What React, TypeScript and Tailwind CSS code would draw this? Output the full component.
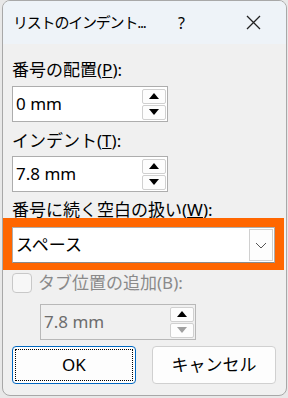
import React from "react";

function SpinButtons({ disabled }: { disabled?: boolean }) {
    return (
        <div className="flex flex-col gap-[1px] pr-[1px]">
            <div className="w-[24px] h-[15px] flex items-center justify-center bg-[#fdfdfd] border border-[#d0d0d0] rounded-[2px]">
                <svg width="10" height="6" viewBox="0 0 10 6">
                    <path d="M5 0 L10 6 L0 6 Z" fill="#000" />
                </svg>
            </div>
            <div className="w-[24px] h-[15px] flex items-center justify-center bg-[#fdfdfd] border border-[#d0d0d0] rounded-[2px]">
                <svg width="10" height="6" viewBox="0 0 10 6">
                    <path d="M0 0 L10 0 L5 6 Z" fill={disabled ? "#a0a0a0" : "#000"} />
                </svg>
            </div>
        </div>
    );
}

function SpinInput({ value, disabled }: { value: string; disabled?: boolean }) {
    return (
        <div
            className={`flex items-center justify-between w-[156px] h-[36px] border ${
                disabled ? "bg-[#f0f0f0] border-[#b8b8b8]" : "bg-white border-[#adadad]"
            }`}
        >
            <span className={`pl-[3px] text-[17px] ${disabled ? "text-[#6d6d6d]" : "text-black"}`}>{value}</span>
            <SpinButtons disabled={disabled} />
        </div>
    );
}

export default function App() {
    return (
        <div
            className="w-[288px] h-[398px] bg-[#e8e8e8] pl-[2px] pr-[1px] pb-[2px] text-black"
            style={{ fontFamily: '"Noto Sans", "Noto Sans CJK JP", sans-serif' }}
        >
            <div className="h-full flex flex-col border border-[#a8a8a8] rounded-[8px] overflow-hidden bg-[#f0f0f0]">
                <div className="h-[43px] shrink-0 flex items-center bg-[#eef3f8] pl-[10px] text-[15px] tracking-[-1.2px]">
                    <span className="w-[165px]">リストのインデント...</span>
                    <span className="w-[68px] text-[16px]">?</span>
                    <svg width="15" height="15" viewBox="0 0 15 15">
                        <path d="M1 1 L14 14 M14 1 L1 14" stroke="#222" strokeWidth="1.3" />
                    </svg>
                </div>
                <div className="flex flex-col pl-[9px] pt-[15px] text-[17px]">
                    <div className="leading-[22px]">
                        番号の配置(<span className="underline">P</span>):
                    </div>
                    <div className="mt-[5px]">
                        <SpinInput value="0 mm" />
                    </div>
                    <div className="leading-[22px] mt-[8px]">
                        インデント(<span className="underline">T</span>):
                    </div>
                    <div className="mt-[4px]">
                        <SpinInput value="7.8 mm" />
                    </div>
                    <div className="leading-[22px] mt-[7px]">
                        番号に続く空白の扱い(<span className="underline">W</span>):
                    </div>
                    <div className="-ml-[9px] w-[281px] -mt-[3px] bg-[#ff6600] pt-[9px] pb-[7px] pl-[9px] pr-[9px]">
                        <div className="flex items-center justify-between h-[36px] bg-white border border-[#adadad] border-b-[#8a8a8a]">
                            <span className="pl-[3px] text-[17px]">スペース</span>
                            <div className="w-[24px] h-[32px] mr-[1px] flex items-center justify-center bg-[#fdfdfd] border border-[#d0d0d0]">
                                <svg width="12" height="7" viewBox="0 0 12 7">
                                    <path d="M1 1 L6 6 L11 1" stroke="#555" strokeWidth="1" fill="none" />
                                </svg>
                            </div>
                        </div>
                    </div>
                    <div className="flex items-center mt-[2px] h-[22px] text-[#8a8a8a]">
                        <div className="w-[20px] h-[20px] border border-[#c8c8c8] rounded-[4px] bg-[#f7f7f7]" />
                        <span className="ml-[6px] leading-[22px]">タブ位置の追加(B):</span>
                    </div>
                    <div className="mt-[10px] ml-[28px]">
                        <SpinInput value="7.8 mm" disabled />
                    </div>
                    <div className="flex gap-[16px] mt-[6px]">
                        <button className="w-[124px] h-[38px] bg-[#fdfdfd] border border-[#0067c0] rounded-[4px] p-[2px]">
                            <div className="w-full h-full flex items-center justify-center border border-dotted border-black text-[17px]">
                                OK
                            </div>
                        </button>
                        <button className="w-[124px] h-[38px] bg-[#fdfdfd] border border-[#d0d0d0] rounded-[4px] flex items-center justify-center text-[17px]">
                            キャンセル
                        </button>
                    </div>
                </div>
            </div>
        </div>
    );
}
